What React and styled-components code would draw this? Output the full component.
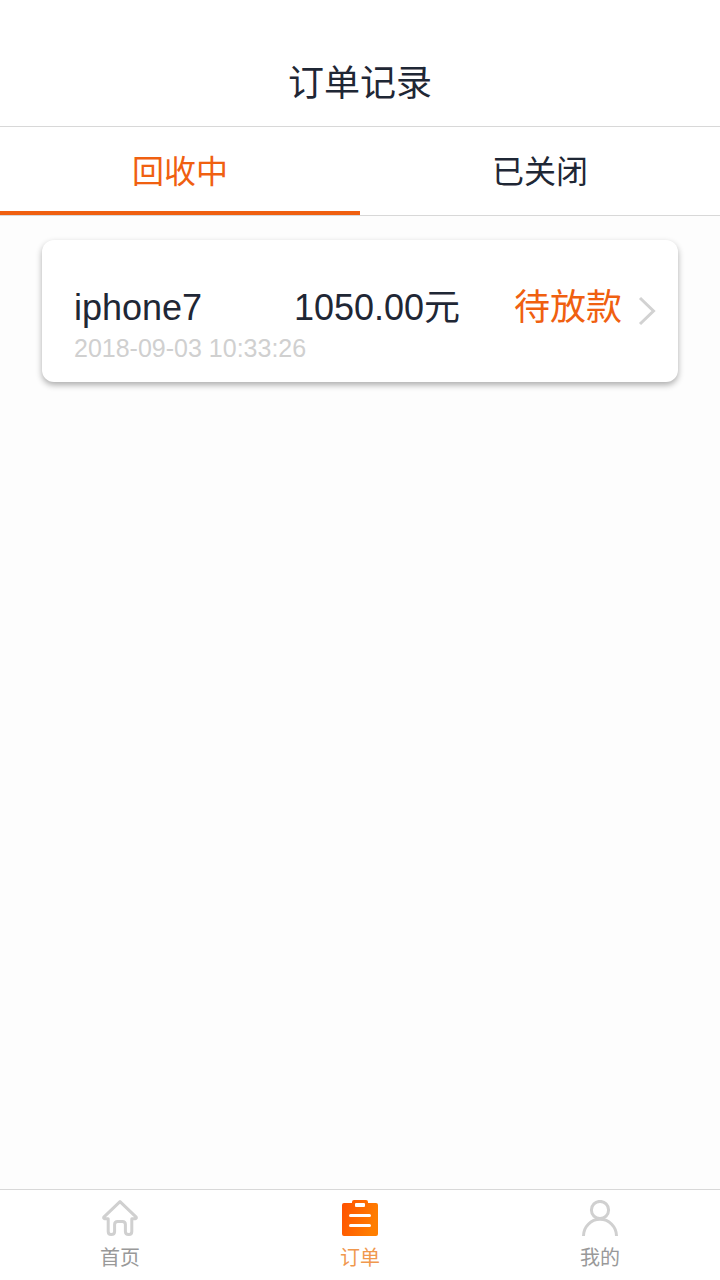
import React, { useState } from 'react';
import styled, { createGlobalStyle } from 'styled-components';

const GlobalStyle = createGlobalStyle`
  * {
    box-sizing: border-box;
  }

  body {
    margin: 0;
    background: #fdfdfd;
    color: #1f2735;
    font-family: "Liberation Sans", "Noto Sans CJK SC", sans-serif;
  }
`;

const Page = styled.div`
  display: flex;
  flex-direction: column;
  min-height: 100vh;
`;

const Header = styled.header`
  padding: 57px 24px 15px;
  background: #fff;
  border-bottom: 1px solid #d8d8d8;
  text-align: center;
`;

const Title = styled.h1`
  margin: 0;
  font-size: 36px;
  font-weight: 400;
  line-height: 54px;
`;

const Tabs = styled.div`
  display: flex;
  background: #fff;
  border-bottom: 1px solid #d8d8d8;
`;

const Tab = styled.button`
  flex: 1;
  height: 88px;
  padding: 6px 0 0;
  border: 0;
  border-bottom: 4px solid ${props => (props.$active ? '#f06010' : 'transparent')};
  background: none;
  color: ${props => (props.$active ? '#f06010' : 'inherit')};
  font-family: inherit;
  font-size: 32px;
  line-height: 48px;
  cursor: pointer;
`;

const Orders = styled.main`
  flex: 1;
  padding: 24px 42px;
`;

const OrderCard = styled.a`
  display: grid;
  grid-template-columns: 1fr 1fr auto auto;
  align-items: center;
  padding: 41px 22px 20px 32px;
  border-radius: 12px;
  background: #fff;
  box-shadow: 0 3px 6px rgba(0, 0, 0, 0.32);
  color: inherit;
  font-size: 36px;
  line-height: 54px;
  text-decoration: none;
`;

const Status = styled.span`
  color: #f06010;
`;

const OrderTime = styled.time`
  grid-column: 1 / -1;
  color: #d0d0d0;
  font-size: 25px;
  line-height: 27px;
`;

const Chevron = styled.svg`
  width: 18px;
  height: 30px;
  margin-left: 16px;
  margin-top: 6px;
  fill: none;
  stroke: #d2d2d2;
  stroke-width: 3;
`;

const TabBar = styled.nav`
  display: flex;
  height: 91px;
  border-top: 1px solid #d8d8d8;
  background: #fff;
`;

const TabBarItem = styled.a`
  flex: 1;
  display: flex;
  flex-direction: column;
  align-items: center;
  gap: 7px;
  padding-top: 10px;
  color: ${props => (props.$active ? '#f0984e' : '#999')};
  font-size: 20px;
  line-height: 30px;
  text-decoration: none;

  svg {
    width: 36px;
    height: 36px;
  }
`;

const HomeIcon = () => (
  <svg viewBox="0 0 36 36" fill="none" stroke="#d0d0d0" strokeWidth="3" strokeLinejoin="round" aria-hidden="true">
    <path d="M18 1.7 L1.8 17.2 Q1.3 18.6 2.8 18.8 H6.2 V31.5 Q6.2 34.5 9.2 34.5 Q12.6 34.5 12.6 31.5 V24.5 Q12.6 21.5 15.6 21.5 H20.4 Q23.4 21.5 23.4 24.5 V31.5 Q23.4 34.5 26.8 34.5 Q29.8 34.5 29.8 31.5 V18.8 H33.2 Q34.7 18.6 34.2 17.2 Z" />
  </svg>
);

const OrderIcon = () => (
  <svg viewBox="0 0 36 36" aria-hidden="true">
    <defs>
      <linearGradient id="orderFill" x1="0" y1="0" x2="1" y2="0.3">
        <stop offset="0" stopColor="#ff5000" />
        <stop offset="1" stopColor="#ff7e00" />
      </linearGradient>
    </defs>
    <path
      fill="url(#orderFill)"
      d="M2 3 H10 V2 Q10 0 12 0 H24 Q26 0 26 2 V3 H34 Q36 3 36 5 V34 Q36 36 34 36 H2 Q0 36 0 34 V5 Q0 3 2 3 Z"
    />
    <rect x="13" y="3" width="10" height="4" rx="1" fill="#fff" />
    <path d="M8.5 15.5 H27.5 M8.5 25.5 H27.5" stroke="#fff" strokeWidth="3" strokeLinecap="round" />
  </svg>
);

const UserIcon = () => (
  <svg viewBox="0 0 36 36" fill="none" stroke="#d0d0d0" strokeWidth="3" aria-hidden="true">
    <circle cx="18" cy="10" r="8.6" />
    <path d="M1.5 36 A16.5 16.7 0 0 1 34.5 36" />
  </svg>
);

const orders = [
  { id: 1, name: 'iphone7', price: '1050.00元', status: '待放款', time: '2018-09-03 10:33:26' }
];

const App = () => {
  const [tab, setTab] = useState('open');
  const visibleOrders = tab === 'open' ? orders : [];

  return (
    <Page>
      <GlobalStyle />
      <Header>
        <Title>订单记录</Title>
      </Header>
      <Tabs role="tablist">
        <Tab role="tab" aria-selected={tab === 'open'} $active={tab === 'open'} onClick={() => setTab('open')}>
          回收中
        </Tab>
        <Tab role="tab" aria-selected={tab === 'closed'} $active={tab === 'closed'} onClick={() => setTab('closed')}>
          已关闭
        </Tab>
      </Tabs>

      <Orders>
        {visibleOrders.map(order => (
          <OrderCard key={order.id} href={`#order-${order.id}`}>
            <span>{order.name}</span>
            <span>{order.price}</span>
            <Status>{order.status}</Status>
            <Chevron viewBox="0 0 18 30" aria-hidden="true">
              <path d="M2 2 L15.5 15 L2 28" />
            </Chevron>
            <OrderTime>{order.time}</OrderTime>
          </OrderCard>
        ))}
      </Orders>

      <TabBar>
        <TabBarItem href="#home">
          <HomeIcon />
          <span>首页</span>
        </TabBarItem>
        <TabBarItem href="#orders" $active>
          <OrderIcon />
          <span>订单</span>
        </TabBarItem>
        <TabBarItem href="#mine">
          <UserIcon />
          <span>我的</span>
        </TabBarItem>
      </TabBar>
    </Page>
  );
};

export default App;
